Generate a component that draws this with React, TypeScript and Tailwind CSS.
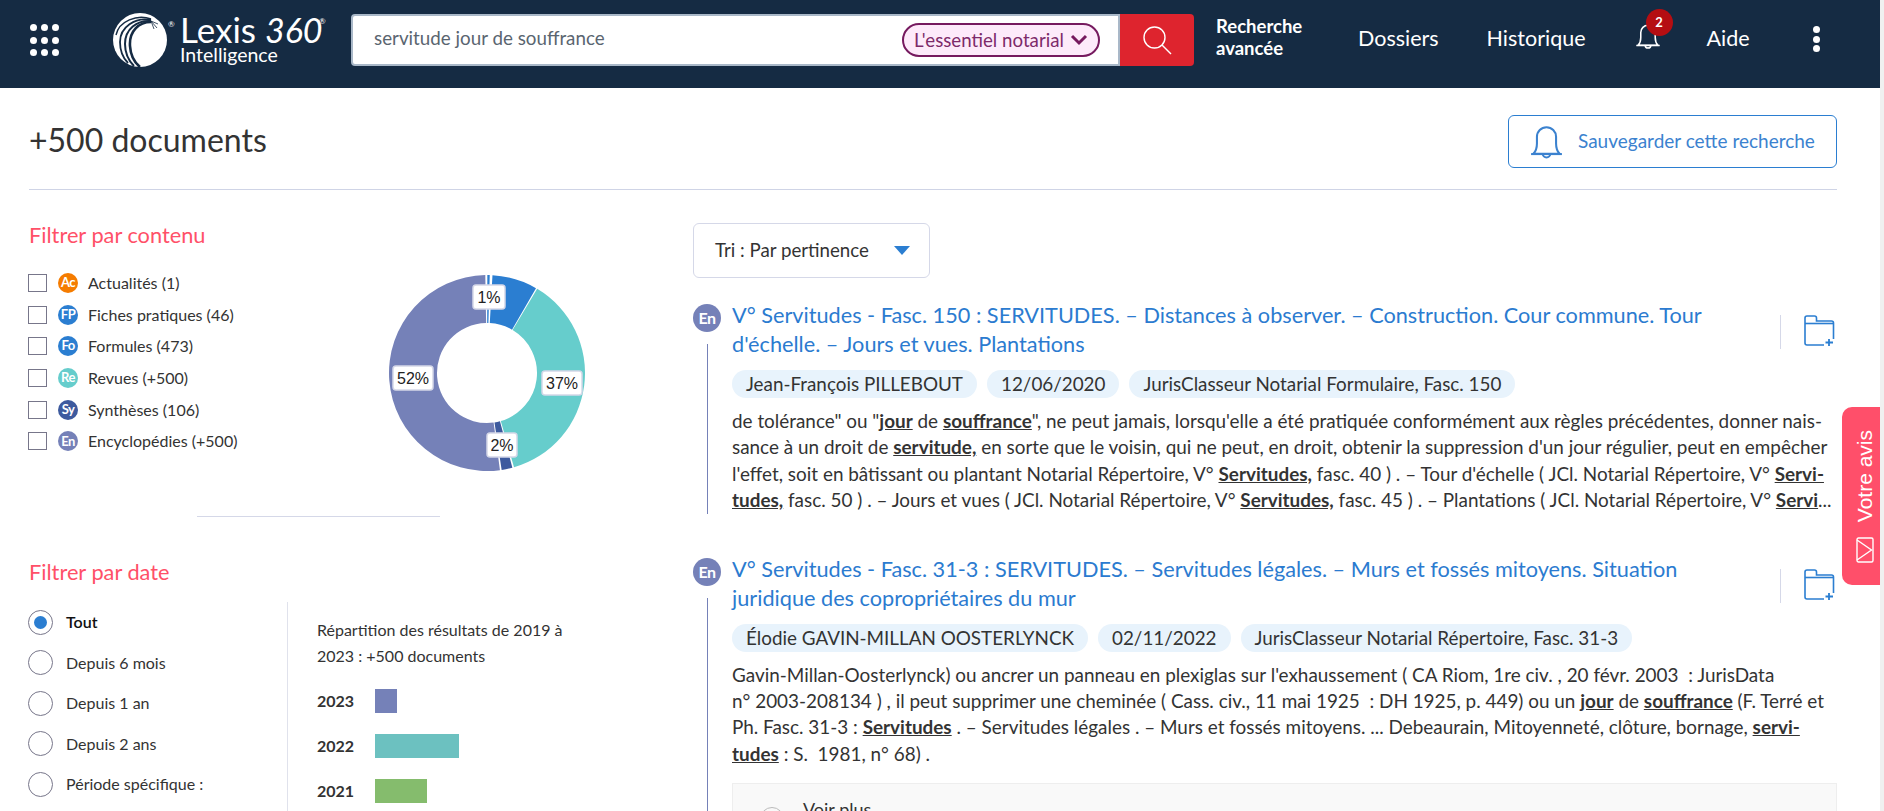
import type { ReactNode } from "react";

const Hl = ({ children }: { children: ReactNode }) => <b className="font-bold underline">{children}</b>;

const Badge = ({ label, color, big }: { label: string; color: string; big?: boolean }) => (
  <span
    className={`flex shrink-0 items-center justify-center rounded-full font-bold tracking-[-0.5px] text-white ${color} ${
      big ? "h-7 w-7 text-[16px]" : "h-5 w-5 text-[13px]"
    }`}
  >
    {label}
  </span>
);

const filters = [
  { label: "Ac", color: "bg-[#f57c00]", text: "Actualités (1)" },
  { label: "FP", color: "bg-[#2b7ed1]", text: "Fiches pratiques (46)" },
  { label: "Fo", color: "bg-[#2b7ed1]", text: "Formules (473)" },
  { label: "Re", color: "bg-[#66cdcc]", text: "Revues (+500)" },
  { label: "Sy", color: "bg-[#3d5a9e]", text: "Synthèses (106)" },
  { label: "En", color: "bg-[#7581b8]", text: "Encyclopédies (+500)" },
];

const polar = (r: number, deg: number) => {
  const a = (deg * Math.PI) / 180;
  return [98 + r * Math.sin(a), 98 - r * Math.cos(a)];
};

const slice = (from: number, to: number) => {
  const [x1, y1] = polar(98, from);
  const [x2, y2] = polar(98, to);
  const [x3, y3] = polar(50, to);
  const [x4, y4] = polar(50, from);
  const large = to - from > 180 ? 1 : 0;
  return `M${x1} ${y1}A98 98 0 ${large} 1 ${x2} ${y2}L${x3} ${y3}A50 50 0 ${large} 0 ${x4} ${y4}Z`;
};

const slices = [
  { from: 0.2, to: 1.6, fill: "#2b7ed1" },
  { from: 3.2, to: 30, fill: "#2b7ed1" },
  { from: 30.8, to: 164, fill: "#66cdcc" },
  { from: 165, to: 171.4, fill: "#3d5a9e" },
  { from: 172.4, to: 359, fill: "#7581b8" },
];

const labels = [
  { x: 84, y: 10, w: 32, text: "1%" },
  { x: 4, y: 91, w: 40, text: "52%" },
  { x: 153, y: 96, w: 40, text: "37%" },
  { x: 98, y: 158, w: 30, text: "2%" },
];

const Donut = () => (
  <svg width="196" height="196" viewBox="0 0 196 196" className="mt-2 shrink-0">
    {slices.map(s => (
      <path key={s.from} d={slice(s.from, s.to)} fill={s.fill} />
    ))}
    {labels.map(l => (
      <g key={l.text}>
        <rect x={l.x} y={l.y} width={l.w} height="24" rx="3" fill="#fff" stroke="#d5d8e8" strokeWidth="1.5" />
        <text x={l.x + l.w / 2} y={l.y + 18} textAnchor="middle" fontSize="16" fill="#222" fontFamily="Liberation Sans">
          {l.text}
        </text>
      </g>
    ))}
  </svg>
);

const Logo = () => (
  <div className="relative ml-[50px] flex w-[214px] shrink-0 items-center text-white">
    <svg width="54" height="54" viewBox="0 0 54 54" className="shrink-0">
      <circle cx="27" cy="27" r="27" fill="#fff" />
      <g fill="none" stroke="#152b43">
        <path d="M38 9C26 9 16 18 17 33C17.500 42 21 49 27 54" strokeWidth="2.6" />
        <path d="M38 8C24 7 12 16 12 31C12 40 15 47 21 53" strokeWidth="2" />
        <path d="M38 7C22 4 7 14 7 29C7 38 10 45 15 50" strokeWidth="1.8" />
        <path d="M38 6C24 1 6 8 3 22" strokeWidth="1.4" />
        <path d="M38 8L45 11M38 8L44 15M38 8L41 16" strokeWidth="0.8" />
      </g>
    </svg>
    <div className="ml-[13px] flex flex-col">
      <div className="whitespace-nowrap text-[35px] leading-[29px]">
        Lexis <span className="text-[34px] italic">360</span>
      </div>
      <div className="text-[19.5px] leading-[22px]">Intelligence</div>
    </div>
    <span className="absolute left-[55px] top-[6px] text-[8px] leading-[10px]">®</span>
    <span className="absolute left-[206px] top-[3px] text-[8px] leading-[10px]">®</span>
  </div>
);

const Bell = ({ className, stroke }: { className: string; stroke: number }) => (
  <svg viewBox="0 0 24 24" fill="none" stroke="currentColor" strokeWidth={stroke} className={className}>
    <path d="M5 18.5c1.6-1.6 1.900-3 1.900-5.500V9.500a5.100 5.100 0 0 1 10.200 0V13c0 2.500.3 3.900 1.900 5.500Z" />
    <path d="M10 18.500a2 2 0 0 0 4 0" />
    <path d="M3.800 18.700h16.400" />
  </svg>
);

const Header = () => (
  <header className="flex h-[88px] shrink-0 items-center bg-[#152b43] pb-2 text-white">
    <div className="ml-[30px] grid h-8 w-[33px] shrink-0 grid-cols-3 content-between justify-between">
      {Array.from({ length: 9 }).map((_, i) => (
        <span key={i} className="h-[7px] w-[7px] rounded-full bg-white" />
      ))}
    </div>
    <Logo />
    <div className="ml-6 flex h-[52px] w-[769px] shrink-0 items-center rounded-l-[4px] border-2 border-[#a9b8c8] bg-white pl-[21px] pr-[18px]">
      <span className="-mt-[3px] flex-1 text-[18.8px] text-[#5a6570]">servitude jour de souffrance</span>
      <span className="flex h-[34px] w-[198px] items-center justify-center gap-[6px] rounded-full border-2 border-[#761a5f] bg-[#fdeafa] text-[18.700px] text-[#7d2a6a]">
        L'essentiel notarial
        <svg width="18" height="12" viewBox="0 0 18 12" fill="none" stroke="#761a5f" strokeWidth="3">
          <path d="M2 2l7 7 7-7" />
        </svg>
      </span>
    </div>
    <div className="flex h-[52px] w-[74px] shrink-0 items-center justify-center rounded-r-[4px] bg-[#de242e]">
      <svg width="32" height="32" viewBox="0 0 32 32" fill="none" stroke="#fff" strokeWidth="1.4">
        <circle cx="13.5" cy="13.5" r="10.5" />
        <path d="M21 21l9 9" />
      </svg>
    </div>
    <div className="ml-[22px] -mt-[6px] w-[100px] text-[18.500px] font-bold leading-[22px]">
      Recherche
      <br />
      avancée
    </div>
    <span className="ml-[42px] -mt-1 text-[21.500px]">Dossiers</span>
    <span className="ml-[48px] -mt-1 text-[21.500px]">Historique</span>
    <div className="relative ml-[45px] -mt-2 h-[34px] w-[34px]">
      <Bell className="h-[34px] w-[34px]" stroke={1.1} />
      <span className="absolute left-[15px] top-[-10px] flex h-[27px] w-[27px] items-center justify-center rounded-full bg-[#b50e12] text-[13px] font-bold">
        2
      </span>
    </div>
    <span className="ml-[42px] -mt-1 text-[21.500px]">Aide</span>
    <div className="ml-[63px] -mt-[2px] flex flex-col gap-[2.500px]">
      <span className="h-[7px] w-[7px] rounded-full bg-white" />
      <span className="h-[7px] w-[7px] rounded-full bg-white" />
      <span className="h-[7px] w-[7px] rounded-full bg-white" />
    </div>
  </header>
);

const Sidebar = () => (
  <aside className="w-[664px] shrink-0">
    <h2 className="mt-[31px] text-[21.750px] leading-[28px] text-[#ff5068]">Filtrer par contenu</h2>
    <div className="mt-[18px] flex">
      <ul className="w-[360px] shrink-0">
        {filters.map(f => (
          <li key={f.label} className="flex h-[31.700px] items-center text-[16px]">
            <span className="-ml-px h-[18px] w-[19px] shrink-0 border border-[#77768a]" />
            <span className="ml-[11px]">
              <Badge label={f.label} color={f.color} />
            </span>
            <span className="ml-[10px]">{f.text}</span>
          </li>
        ))}
      </ul>
      <Donut />
    </div>
    <hr className="ml-[168px] mt-[45px] w-[243px] border-[#d5d8e8]" />
    <h2 className="mt-[41px] text-[21.750px] leading-[28px] text-[#ff5068]">Filtrer par date</h2>
    <div className="mt-4 flex">
      <div className="w-[258px] shrink-0">
        {["Tout", "Depuis 6 mois", "Depuis 1 an", "Depuis 2 ans", "Période spécifique :"].map((t, i) => (
          <div key={t} className="-ml-px flex h-[40.500px] items-center text-[16px]">
            <span className="flex h-[25px] w-[25px] shrink-0 items-center justify-center rounded-full border border-[#77768a]">
              {i === 0 && <span className="h-[13px] w-[13px] rounded-full bg-[#2b7ed1]" />}
            </span>
            <span className={`ml-[13px] ${i === 0 ? "font-semibold text-[#111]" : ""}`}>{t}</span>
          </div>
        ))}
      </div>
      <div className="h-[260px] border-l border-[#e0e2ec] pl-[29px]">
        <p className="w-[260px] pt-[15px] text-[16px] leading-[26px]">
          Répartition des résultats de 2019 à 2023 : +500 documents
        </p>
        {[
          { y: "2023", w: "w-[22px]", c: "bg-[#7581b8]" },
          { y: "2022", w: "w-[84px]", c: "bg-[#6cc1c0]" },
          { y: "2021", w: "w-[52px]", c: "bg-[#85bc6d]" },
        ].map(b => (
          <div key={b.y} className="mt-[21px] flex h-6 items-center first-of-type:mt-5">
            <span className="w-[58px] text-[16px] font-bold">{b.y}</span>
            <span className={`h-6 ${b.w} ${b.c}`} />
          </div>
        ))}
      </div>
    </div>
  </aside>
);

const FolderPlus = () => (
  <svg width="32" height="32" viewBox="0 0 32 32" fill="none" stroke="#2b7ed1" strokeWidth="1.6" className="shrink-0">
    <path d="M21 30H4a2 2 0 0 1-2-2V3a2 2 0 0 1 2-2h7.500a2 2 0 0 1 2 2v3h15a2 2 0 0 1 2 2v16" />
    <path d="M2 8.500h28" />
    <path d="M26 24v7M22.500 27.500h7.500" strokeWidth="1.8" />
  </svg>
);

type ResultProps = {
  title: string[];
  chips: string[];
  lines: ReactNode[];
  children?: ReactNode;
};

const Result = ({ title, chips, lines, children }: ResultProps) => (
  <article className="flex">
    <div className="flex w-[39px] shrink-0 flex-col">
      <Badge label="En" color="bg-[#7581b8]" big />
      <span className="ml-[14px] mt-[12px] w-px flex-1 bg-[#7581b8]" />
    </div>
    <div className="flex-1">
      <div className="-mt-[3px] flex justify-between">
        <h3 className="text-[21.700px] leading-[29px] text-[#2b7bd0]">
          {title.map(t => (
            <span key={t} className="block whitespace-nowrap">
              {t}
            </span>
          ))}
        </h3>
        <div className="mr-[2px] mt-[14px] flex h-[34px] items-start border-l border-[#d5d8e8] pl-[22px]">
          <FolderPlus />
        </div>
      </div>
      <div className="mt-[11px] flex gap-[10px]">
        {chips.map(c => (
          <span key={c} className="flex h-7 items-center rounded-full bg-[#e8f3fc] px-[14px] text-[18.850px]">
            {c}
          </span>
        ))}
      </div>
      <div className="mt-[10px] text-[18.900px] leading-[26.400px]">
        {lines.map((l, i) => (
          <span key={i} className="block whitespace-pre">
            {l}
          </span>
        ))}
      </div>
      {children}
    </div>
  </article>
);

const Results = () => (
  <section className="min-w-0 flex-1">
    <div className="mt-[33px] flex h-[55px] w-[237px] items-center rounded-[6px] border border-[#d5d8e8] pl-[21px] text-[18.700px]">
      Tri : Par pertinence
      <span className="ml-[25px] h-0 w-0 border-x-[8px] border-t-[9px] border-x-transparent border-t-[#2b7ed1]" />
    </div>
    <div className="mt-[26px] flex flex-col gap-[44px]">
      <Result
        title={[
          "V° Servitudes - Fasc. 150 : SERVITUDES. – Distances à observer. – Construction. Cour commune. Tour",
          "d'échelle. – Jours et vues. Plantations",
        ]}
        chips={["Jean-François PILLEBOUT", "12/06/2020", "JurisClasseur Notarial Formulaire, Fasc. 150"]}
        lines={[
          <>
            de tolérance" ou "<Hl>jour</Hl> de <Hl>souffrance</Hl>", ne peut jamais, lorsqu'elle a été pratiquée
            conformément aux règles précédentes, donner nais-
          </>,
          <>
            sance à un droit de <Hl>servitude,</Hl> en sorte que le voisin, qui ne peut, en droit, obtenir la suppression
            d'un jour régulier, peut en empêcher
          </>,
          <>
            l'effet, soit en bâtissant ou plantant Notarial Répertoire, V° <Hl>Servitudes,</Hl> fasc. 40 ) . – Tour
            d'échelle ( JCl. Notarial Répertoire, V° <Hl>Servi-</Hl>
          </>,
          <>
            <Hl>tudes,</Hl> fasc. 50 ) . – Jours et vues ( JCl. Notarial Répertoire, V° <Hl>Servitudes,</Hl> fasc. 45 ) .
            – Plantations ( JCl. Notarial Répertoire, V° <Hl>Servi</Hl>...
          </>,
        ]}
      />
      <Result
        title={[
          "V° Servitudes - Fasc. 31-3 : SERVITUDES. – Servitudes légales. – Murs et fossés mitoyens. Situation",
          "juridique des copropriétaires du mur",
        ]}
        chips={["Élodie GAVIN-MILLAN OOSTERLYNCK", "02/11/2022", "JurisClasseur Notarial Répertoire, Fasc. 31-3"]}
        lines={[
          <>
            Gavin-Millan-Oosterlynck) ou ancrer un panneau en plexiglas sur l'exhaussement ( CA Riom, 1re civ. , 20 févr.
            2003{"  "}: JurisData
          </>,
          <>
            n° 2003-208134 ) , il peut supprimer une cheminée ( Cass. civ., 11 mai 1925{"  "}: DH 1925, p. 449) ou un{" "}
            <Hl>jour</Hl> de <Hl>souffrance</Hl> (F. Terré et
          </>,
          <>
            Ph. Fasc. 31-3 : <Hl>Servitudes</Hl> . – Servitudes légales . – Murs et fossés mitoyens. ... Debeaurain,
            Mitoyenneté, clôture, bornage, <Hl>servi-</Hl>
          </>,
          <>
            <Hl>tudes</Hl> : S.{"  "}1981, n° 68) .
          </>,
        ]}
      >
        <div className="mt-4 flex h-[100px] border border-[#eeeeee] bg-[#f9f9f9] pl-[27px] pt-3">
          <span className="mt-[11px] h-6 w-6 rounded-full border border-[#bbb]" />
          <span className="ml-[19px] text-[18px]">Voir plus</span>
        </div>
      </Result>
    </div>
  </section>
);

export default function App() {
  return (
    <div className="flex h-screen overflow-hidden bg-white font-['Lato',sans-serif] text-[#333]">
      <div className="relative flex min-w-0 flex-1 flex-col">
        <Header />
        <main className="flex-1 pl-[29px] pr-[43px]">
          <div className="flex h-[102px] items-start justify-between border-b border-[#cfd4e6] pt-[27px]">
            <h1 className="-mt-px text-[32px] leading-[52px]">+500 documents</h1>
            <button className="flex h-[53px] w-[329px] items-center rounded-[6px] border border-[#2b7ed1] pl-[15px] text-[19px] text-[#3b82cf]">
              <Bell className="h-[45px] w-[45px]" stroke={1.1} />
              <span className="ml-[9px]">Sauvegarder cette recherche</span>
            </button>
          </div>
          <div className="flex">
            <Sidebar />
            <Results />
          </div>
        </main>
        <aside className="absolute right-0 top-[407px] flex h-[178px] w-[38px] flex-col items-center justify-between rounded-l-[10px] bg-[#ff4f6a] pb-[22px] pl-2 pt-[23px] text-white">
          <span className="rotate-180 font-['Liberation_Sans',sans-serif] text-[21px] leading-[24px] [writing-mode:vertical-rl]">
            Votre avis
          </span>
          <svg width="18" height="26" viewBox="0 0 18 26" fill="none" stroke="#fff" strokeWidth="1.4">
            <rect x="1" y="1" width="16" height="24" rx="1.5" />
            <path d="M1 3l14.500 10L1 23" />
          </svg>
        </aside>
      </div>
      <div className="w-1 shrink-0 bg-[#f0f0f0]" />
    </div>
  );
}
